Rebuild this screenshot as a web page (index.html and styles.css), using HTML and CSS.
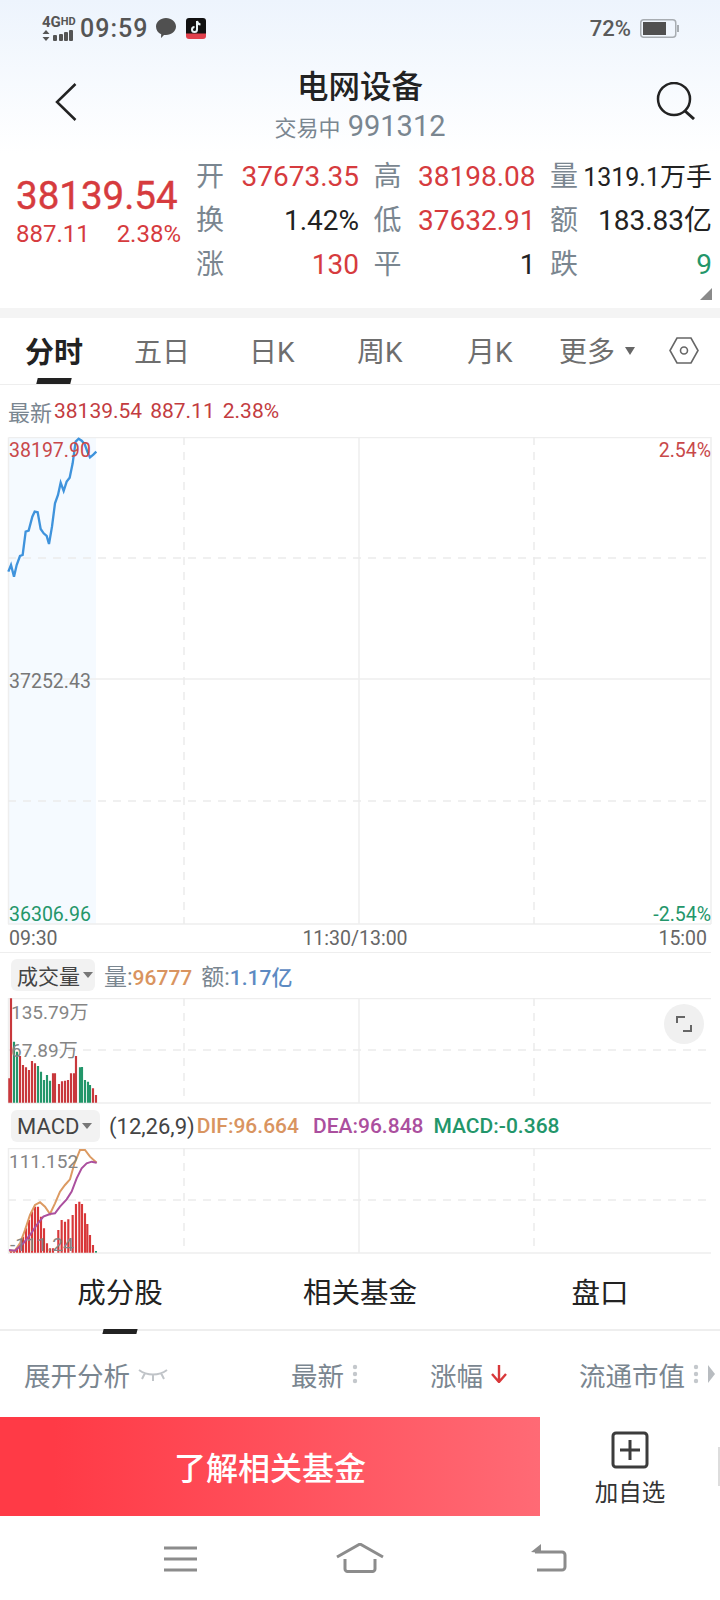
FILE: index.html
```html
<!DOCTYPE html>
<html>
<head>
  <meta charset="utf-8">
  <title>电网设备</title>
  <link rel="stylesheet" href="styles.css">
</head>
<body>
<div class="page">
  <div class="top">
    <div class="status">
      <div class="net">
        <div class="net-text">4G<span>HD</span></div>
        <svg width="32" height="11" viewBox="0 0 32 11"><path d="M4 0l3.500 4h-7zM4 11L.5 7h7z" fill="#555"/><rect x="11" y="5" width="4" height="6" rx="1" fill="#555"/><rect x="17" y="4" width="4" height="7" rx="1" fill="#555"/><rect x="22" y="2" width="4" height="9" rx="1" fill="#555"/><rect x="27" y="0" width="4" height="11" rx="1" fill="#555"/></svg>
      </div>
      <div class="time">09:59</div>
      <svg class="bubble" width="20" height="20" viewBox="0 0 20 20"><path d="M10 0c5.500 0 10 3.700 10 8.500S15.500 17 10 17l-2 .1L5 20l.2-3.800C2 14.800 0 12 0 8.500 0 3.700 4.500 0 10 0z" fill="#505050"/></svg>
      <svg class="tiktok" width="20" height="21" viewBox="0 0 20 21"><rect width="20" height="19" rx="3" fill="#111"/><path d="M11 3v8.500a2.500 2.500 0 1 1-2.500-2.500M11 3c.3 2 1.600 3.300 3.500 3.500" fill="none" stroke="#e8f4f6" stroke-width="2"/><path d="M0 15.500h20V18a3 3 0 0 1-3 3H3a3 3 0 0 1-3-3z" fill="#e0404c"/></svg>
      <div class="status-right">
        <span class="pct">72%</span>
        <svg width="39" height="19" viewBox="0 0 39 19"><rect x=".75" y=".75" width="35" height="17.500" rx="3" fill="none" stroke="#a8adb2" stroke-width="1.500"/><rect x="3" y="3" width="23" height="13" fill="#505050"/><rect x="37" y="6" width="2" height="7" fill="#a8adb2"/></svg>
      </div>
    </div>

    <div class="head">
      <svg class="back" width="22" height="38" viewBox="0 0 22 38"><path d="M20.500 1L2 19l18.500 18" fill="none" stroke="#222" stroke-width="2.500"/></svg>
      <div class="head-mid">
        <div class="title">电网设备</div>
        <div class="sub"><span class="sub-state">交易中</span> 991312</div>
      </div>
      <svg class="search" width="40" height="38" viewBox="0 0 40 38"><circle cx="18" cy="17" r="16" fill="none" stroke="#222" stroke-width="2.500"/><path d="M29 29l9 8" fill="none" stroke="#222" stroke-width="3"/></svg>
    </div>
  </div>

  <div class="quote">
    <div class="price">
      <div class="price-big">38139.54</div>
      <div class="price-sub"><span>887.11</span><span>2.38%</span></div>
    </div>
    <div class="stats">
      <div class="stat"><span class="lb">开</span><span class="red">37673.35</span></div>
      <div class="stat"><span class="lb">高</span><span class="red">38198.08</span></div>
      <div class="stat"><span class="lb">量</span><span class="dark vol">1319.1<i>万手</i></span></div>
      <div class="stat"><span class="lb">换</span><span class="dark">1.42%</span></div>
      <div class="stat"><span class="lb">低</span><span class="red">37632.91</span></div>
      <div class="stat"><span class="lb">额</span><span class="dark">183.83亿</span></div>
      <div class="stat"><span class="lb">涨</span><span class="red">130</span></div>
      <div class="stat"><span class="lb">平</span><span class="dark">1</span></div>
      <div class="stat"><span class="lb">跌</span><span class="green">9</span></div>
    </div>
    <div class="corner"></div>
  </div>

  <div class="band"></div>

  <div class="tabs">
    <div class="tab on">分时</div>
    <div class="tab t2">五日</div>
    <div class="tab t3">日K</div>
    <div class="tab t4">周K</div>
    <div class="tab t5">月K</div>
    <div class="tab t6">更多<span class="tri"></span></div>
    <svg class="hex" width="30" height="27" viewBox="0 0 30 27"><path d="M8 1h14l7 12.500L22 26H8L1 13.500z" fill="none" stroke="#666" stroke-width="1.600"/><circle cx="15" cy="13.500" r="3.500" fill="none" stroke="#666" stroke-width="1.600"/></svg>
  </div>

  <div class="latest"><span class="latest-lb">最新</span><span>38139.54</span><span>887.11</span><span>2.38%</span></div>

  <div class="chart chart-main">
    <svg width="720" height="488" viewBox="0 437 720 488">
      <rect x="9" y="438" width="87" height="486" fill="#f5faff"/>
      <path class="solid" d="M8.500 437.500H711M8.500 437.500V924M8 924H711M711 437V924M359 437V924M8 679H711"/>
      <path class="dash" d="M8 558H711M8 801H711M184 437V924M534 437V924"/>
      <g transform="translate(0 430) scale(.3333)">
        <polyline fill="none" stroke="#3f93dc" stroke-width="7" points="25,425 33,405 42,440 50,405 60,378 68,375 77,305 86,302 97,260 104,245 113,247 122,297 131,310 140,318 147,342 156,290 165,220 174,195 182,158 191,183 200,155 209,143 218,100 227,35 236,26 245,32 254,42 262,65 270,82 280,74 289,65"/>
      </g>
    </svg>
    <span class="lab-l red-lab row-top">38197.90</span>
    <span class="lab-r red-lab row-top">2.54%</span>
    <span class="lab-l gray-lab row-mid">37252.43</span>
    <span class="lab-l green-lab row-bot">36306.96</span>
    <span class="lab-r green-lab row-bot">-2.54%</span>
  </div>
  <div class="axis"><span>09:30</span><span class="axis-mid">11:30/13:00</span><span>15:00</span></div>

  <div class="sub-head">
    <div class="pick">成交量<span class="tri small"></span></div>
    <span class="kv ml1">量:<b class="orange">96777</b></span>
    <span class="kv ml2">额:<b class="blue">1.17亿</b></span>
  </div>
  <div class="chart chart-sm">
    <svg width="720" height="106" viewBox="0 998 720 106">
      <path class="solid" d="M8 998.500H711M8 1103H711M8.500 998V1103M359 998V1103"/>
      <path class="dash" d="M8 1050H711M184 998V1103M534 998V1103"/>
      <g transform="translate(0 950) scale(.3333)" fill="none" stroke-width="6.500">
        <path stroke="#c8383c" d="M28 458V385M33 458V145M60 458V318M69 458V345M78 458V352M87 458V360M96 458V333M105 458V340M159 458V370M165 458V370M177 458V402M186 458V394M195 458V392M204 458V390M213 458V370M222 458V370M228 458V318M279 458V415M288 458V435"/>
        <path stroke="#23966a" d="M42 458V275M51 458V305M114 458V348M123 458V365M132 458V390M141 458V375M150 458V392M240 458V352M246 458V351M255 458V390M264 458V395M270 458V405"/>
      </g>
    </svg>
    <span class="sm-lab sm1">135.79万</span>
    <span class="sm-lab sm2">67.89万</span>
    <div class="full"><svg width="16" height="16" viewBox="0 0 16 16"><path d="M1 7V1h8M15 9v6H7" fill="none" stroke="#666" stroke-width="2"/></svg></div>
  </div>

  <div class="sub-head macd-head">
    <div class="pick pick-macd">MACD<span class="tri small"></span></div>
    <span class="param">(12,26,9)</span>
    <span class="orange macd-v">DIF:96.664</span>
    <span class="purple macd-v ml3">DEA:96.848</span>
    <span class="teal macd-v ml4">MACD:-0.368</span>
  </div>
  <div class="chart chart-sm">
    <svg width="720" height="106" viewBox="0 1148 720 106">
      <path class="solid" d="M8 1148.500H711M8 1253H711M8.500 1148V1253M359 1148V1253"/>
      <path class="dash" d="M8 1200H711M184 1148V1253M534 1148V1253"/>
      <g transform="translate(0 1100) scale(.3333)" fill="none">
        <path stroke="#d8383a" stroke-width="6.500" d="M33 458V450M42 458V450M51 458V445M60 458V430M69 458V410M78 458V385M87 458V360M96 458V335M105 458V320M114 458V320M123 458V350M132 458V385M141 458V430M150 458V445M159 458V445M175 458V390M185 458V360M195 458V365M205 458V358M218 458V345M228 458V312M238 458V305M246 458V312M255 458V340M262 458V372M270 458V405M279 458V435"/>
        <path stroke="#23966a" stroke-width="6" d="M288 458V453"/>
        <polyline stroke="#dc9a62" stroke-width="6" points="27,452 45,452 60,430 75,390 90,345 105,315 120,307 135,320 150,342 165,310 180,275 195,255 210,238 222,195 240,150 255,150 270,170 290,188"/>
        <polyline stroke="#ab4f9e" stroke-width="6" points="27,450 45,452 70,430 90,405 110,375 130,350 150,342 165,340 180,320 200,298 215,275 230,235 245,205 260,190 275,185 290,188"/>
      </g>
    </svg>
    <span class="sm-lab sm3">111.152</span>
    <span class="sm-lab sm4">-111.24</span>
  </div>

  <div class="tabs2">
    <div class="tab2 on">成分股</div>
    <div class="tab2">相关基金</div>
    <div class="tab2">盘口</div>
  </div>

  <div class="cols">
    <div class="col">展开分析
      <svg width="30" height="13" viewBox="0 0 30 13"><path d="M1 2c8 6 20 6 28 0M7 5L4 11M15 7v6M23 5l3 6" fill="none" stroke="#c0c4c8" stroke-width="2"/></svg>
    </div>
    <div class="col">最新
      <svg class="dots" width="6" height="20" viewBox="0 0 6 20"><circle cx="3" cy="3" r="2.200"/><circle cx="3" cy="10" r="2.200"/><circle cx="3" cy="17" r="2.200"/></svg>
    </div>
    <div class="col">涨幅
      <svg width="16" height="18" viewBox="0 0 16 18"><path d="M8 0v16M1 9l7 8 7-8" fill="none" stroke="#d8383a" stroke-width="2.400"/></svg>
    </div>
    <div class="col">流通市值
      <svg class="dots" width="6" height="20" viewBox="0 0 6 20"><circle cx="3" cy="3" r="2.200"/><circle cx="3" cy="10" r="2.200"/><circle cx="3" cy="17" r="2.200"/></svg>
      <span class="more"></span>
    </div>
  </div>

  <div class="bottom">
    <div class="buy">了解相关基金</div>
    <div class="add">
      <svg width="38" height="38" viewBox="0 0 38 38"><rect x="2" y="2" width="34" height="34" rx="3" fill="none" stroke="#3c3c3c" stroke-width="3"/><path d="M19 9v20M9 19h20" fill="none" stroke="#3c3c3c" stroke-width="3"/></svg>
      <span>加自选</span>
    </div>
    <div class="edge"></div>
  </div>

  <div class="sysnav">
    <svg class="nav-menu" width="33" height="26" viewBox="0 0 33 26"><path d="M0 2h33M0 13h33M0 24h33" fill="none" stroke="#8c8c8c" stroke-width="3"/></svg>
    <svg class="nav-home" width="48" height="30" viewBox="0 0 48 30"><path d="M1 14L24 1l23 13" fill="none" stroke="#8c8c8c" stroke-width="3"/><path d="M9 16v10a2.500 2.500 0 0 0 2.500 2.500h25A2.500 2.500 0 0 0 39 26V16" fill="none" stroke="#8c8c8c" stroke-width="3"/></svg>
    <svg class="nav-back" width="36" height="28" viewBox="0 0 36 28"><path d="M4 8h27a3 3 0 0 1 3 3v12a3 3 0 0 1-3 3H6" fill="none" stroke="#8c8c8c" stroke-width="3"/><path d="M10 0L0 8l10 1z" fill="#8c8c8c"/></svg>
  </div>
</div>
</body>
</html>
```

FILE: styles.css
```css
* {
  box-sizing: border-box;
}

body {
  margin: 0;
  background-color: #ffffff;
  font-family: Roboto, "Noto Sans CJK SC", sans-serif;
}

.page {
  position: relative;
  width: 720px;
  height: 1600px;
  overflow: hidden;
}

.top {
  height: 153px;
  background: linear-gradient(#edf4fd, #ffffff);
}

/* status bar */
.status {
  display: flex;
  align-items: center;
  height: 56px;
  padding-left: 42px;
}

.net {
  width: 32px;
  color: #555;
}

.net-text {
  font-size: 15px;
  font-weight: 700;
  line-height: 13px;
  margin-bottom: 1px;
  white-space: nowrap;
}

.net-text span {
  font-size: 11px;
  vertical-align: 2px;
}

.net svg {
  display: block;
}

.time {
  margin-left: 6px;
  font-size: 25px;
  font-weight: 500;
  letter-spacing: 1px;
  color: #555;
}

.bubble {
  margin-left: 8px;
}

.tiktok {
  margin-left: 10px;
}

.status-right {
  display: flex;
  align-items: center;
  margin-left: auto;
  padding-right: 41px;
}

.pct {
  font-size: 22px;
  font-weight: 500;
  color: #5a5a5a;
  margin-right: 9px;
}

/* title */
.head {
  display: grid;
  grid-template-columns: 1fr auto 1fr;
  padding: 0 24px;
}

.back {
  margin: 27px 0 0 31px;
}

.search {
  justify-self: end;
  margin-top: 26px;
}

.head-mid {
  text-align: center;
}

.title {
  margin-top: 13px;
  font-size: 31.500px;
  font-weight: 500;
  line-height: 38px;
  color: #222;
}

.sub {
  font-size: 29px;
  line-height: 38px;
  color: #7a8690;
}

.sub-state {
  font-size: 22px;
}

/* quote */
.quote {
  position: relative;
  display: flex;
  height: 155px;
}

.price {
  width: 196px;
  padding: 21px 0 0 16px;
  color: #d63b3e;
}

.price-big {
  font-size: 38.500px;
  font-weight: 400;
  line-height: 44px;
  -webkit-text-stroke: 0.4px #d63b3e;
}

.price-sub {
  display: flex;
  justify-content: space-between;
  width: 165px;
  font-size: 24px;
  line-height: 32px;
}

.stats {
  display: grid;
  grid-template-columns: 163px 162px 162px;
  grid-auto-rows: 44px;
  column-gap: 14.5px;
  padding-top: 2px;
}

.stat {
  display: flex;
  align-items: center;
  justify-content: space-between;
  font-size: 28px;
  line-height: 44px;
}

.lb {
  color: #7a8690;
}

.red {
  color: #d63b3e;
}

.dark {
  color: #222;
}

.green {
  color: #23966a;
}

.vol {
  font-size: 25px;
}

.vol i {
  font-style: normal;
  font-size: 26px;
}

.corner {
  position: absolute;
  right: 8px;
  top: 135px;
  width: 0;
  height: 0;
  border-left: 12px solid transparent;
  border-bottom: 12px solid #8a8a8a;
}

.band {
  height: 10px;
  background-color: #f4f4f4;
}

/* period tabs */
.tabs {
  position: relative;
  display: flex;
  align-items: center;
  height: 67px;
  border-bottom: 1px solid #eeeeee;
  font-size: 28px;
  color: #6e6e6e;
  padding-bottom: 1px;
}

.tab {
  position: absolute;
  top: 14px;
  line-height: 42px;
  white-space: nowrap;
}

.tab.on {
  left: 25px;
  font-size: 29px;
  font-weight: 700;
  color: #222;
}

.tab.on::after {
  content: "";
  position: absolute;
  left: 12px;
  top: 46px;
  width: 34px;
  height: 6px;
  background-color: #222;
  transform: skewX(-14deg);
}

.t2 { left: 134px; }
.t3 { left: 249px; }
.t4 { left: 357px; }
.t5 { left: 467px; }
.t6 { left: 559px; }

.tri {
  display: inline-block;
  width: 0;
  height: 0;
  margin-left: 10px;
  vertical-align: 7px;
  border-left: 5px solid transparent;
  border-right: 5px solid transparent;
  border-top: 8px solid #666;
}

.tri.small {
  margin-left: 3px;
  vertical-align: 3px;
  border-left-width: 5px;
  border-right-width: 5px;
  border-top-width: 6px;
  border-top-color: #777;
}

.hex {
  position: absolute;
  left: 669px;
  top: 19px;
}

/* latest line */
.latest {
  display: flex;
  align-items: center;
  gap: 8px;
  height: 52px;
  padding: 0 0 0 8px;
  font-size: 21px;
  color: #c33c3f;
}

.latest-lb {
  margin-right: -6px;
  font-size: 22px;
  color: #7a8690;
}

/* charts */
.chart {
  position: relative;
}

.chart svg {
  display: block;
}

.chart-main {
  height: 488px;
}

.chart-sm {
  height: 106px;
}

.solid {
  fill: none;
  stroke: #eeeeee;
  stroke-width: 1.500;
}

.dash {
  fill: none;
  stroke: #ebebeb;
  stroke-width: 1.500;
  stroke-dasharray: 8 7;
}

.lab-l,
.lab-r {
  position: absolute;
  font-size: 19.500px;
  line-height: 24px;
}

.lab-l {
  left: 9px;
}

.lab-r {
  right: 9px;
}

.row-top {
  top: 2px;
}

.row-mid {
  top: 233px;
}

.row-bot {
  top: 466px;
}

.red-lab {
  color: #c8484a;
}

.gray-lab {
  color: #777;
}

.green-lab {
  color: #23966a;
}

.axis {
  display: flex;
  justify-content: space-between;
  width: 711px;
  height: 28px;
  padding: 2px 4px 0 9px;
  border-bottom: 1.500px solid #eeeeee;
  font-size: 19.500px;
  line-height: 24px;
  color: #666;
}

.axis-mid {
  position: relative;
  left: -3px;
}

.sub-head {
  display: flex;
  align-items: center;
  height: 45px;
  padding: 0 0 2px 11px;
  font-size: 21px;
  color: #7a8690;
}

.macd-head {
  height: 44px;
  padding-bottom: 0;
}

.pick {
  display: flex;
  align-items: center;
  width: 84px;
  height: 32px;
  padding-left: 6px;
  border-radius: 6px;
  background-color: #f2f2f2;
  font-size: 21px;
  color: #444;
}

.pick .tri {
  vertical-align: 0;
}

.pick-macd {
  width: 89px;
  font-size: 22px;
}

.kv {
  font-size: 23px;
}

.kv b {
  font-size: 21px;
  font-weight: 500;
}

.ml1 {
  margin-left: 9px;
}

.ml2 {
  margin-left: 9px;
}

.ml3 {
  margin-left: 14px;
}

.ml4 {
  margin-left: 10px;
}

.orange {
  color: #d99460;
}

.blue {
  color: #5d8ac2;
}

.purple {
  color: #ab4f9e;
}

.teal {
  color: #23966a;
}

.param {
  margin-left: 9px;
  color: #444;
  font-size: 22px;
}

.macd-v {
  font-size: 21px;
  font-weight: 500;
}

.param + .macd-v {
  margin-left: 2px;
}

.sm-lab {
  position: absolute;
  font-size: 19px;
  line-height: 24px;
  color: #858585;
}

.sm1 { left: 11px; top: 3px; }
.sm2 { left: 11px; top: 41px; }
.sm3 { left: 9px; top: 2px; }
.sm4 { left: 10px; top: 85px; }

.full {
  position: absolute;
  left: 664px;
  top: 6px;
  display: flex;
  align-items: center;
  justify-content: center;
  width: 40px;
  height: 40px;
  border-radius: 50%;
  background-color: #f0f0f0;
}

/* lower tabs */
.tabs2 {
  display: grid;
  grid-template-columns: 240px 240px 240px;
  height: 77px;
  border-bottom: 2px solid #eeeeee;
  font-size: 28.500px;
  line-height: 80px;
  text-align: center;
  color: #222;
}

.tab2.on {
  position: relative;
}

.tab2.on::after {
  content: "";
  position: absolute;
  left: 103px;
  bottom: 0;
  width: 34px;
  height: 5px;
  background-color: #222;
  transform: skewX(-14deg);
}

.cols {
  display: grid;
  grid-template-columns: 267px 139px 149px 1fr;
  align-items: center;
  height: 86px;
  padding: 0 0 0 24px;
  font-size: 26.500px;
  color: #7a8690;
}

.col {
  display: flex;
  align-items: center;
  gap: 8px;
  white-space: nowrap;
}

.dots {
  fill: #c4c8cc;
}

.more {
  width: 0;
  height: 0;
  margin-left: 1px;
  border-top: 9px solid transparent;
  border-bottom: 9px solid transparent;
  border-left: 7px solid #b8bcc0;
}

/* bottom bar */
.bottom {
  position: relative;
  display: flex;
  height: 99px;
}

.buy {
  width: 540px;
  background: linear-gradient(90deg, #ff3a46 10%, #ff6a75 100%);
  font-size: 32px;
  font-weight: 500;
  line-height: 104px;
  text-align: center;
  color: #ffffff;
}

.add {
  display: flex;
  flex-direction: column;
  align-items: center;
  width: 156px;
  padding-top: 14px;
  margin-left: 12px;
  font-size: 23.500px;
  line-height: 34px;
  color: #333;
}

.add svg {
  margin-bottom: 7px;
}

.edge {
  position: absolute;
  right: 0;
  top: 30px;
  width: 2px;
  height: 39px;
  background-color: #dddddd;
}

.sysnav {
  position: relative;
  height: 84px;
}

.sysnav svg {
  position: absolute;
}

.nav-menu { left: 164px; top: 30px; }
.nav-home { left: 336px; top: 27px; }
.nav-back { left: 531px; top: 28px; }
```
